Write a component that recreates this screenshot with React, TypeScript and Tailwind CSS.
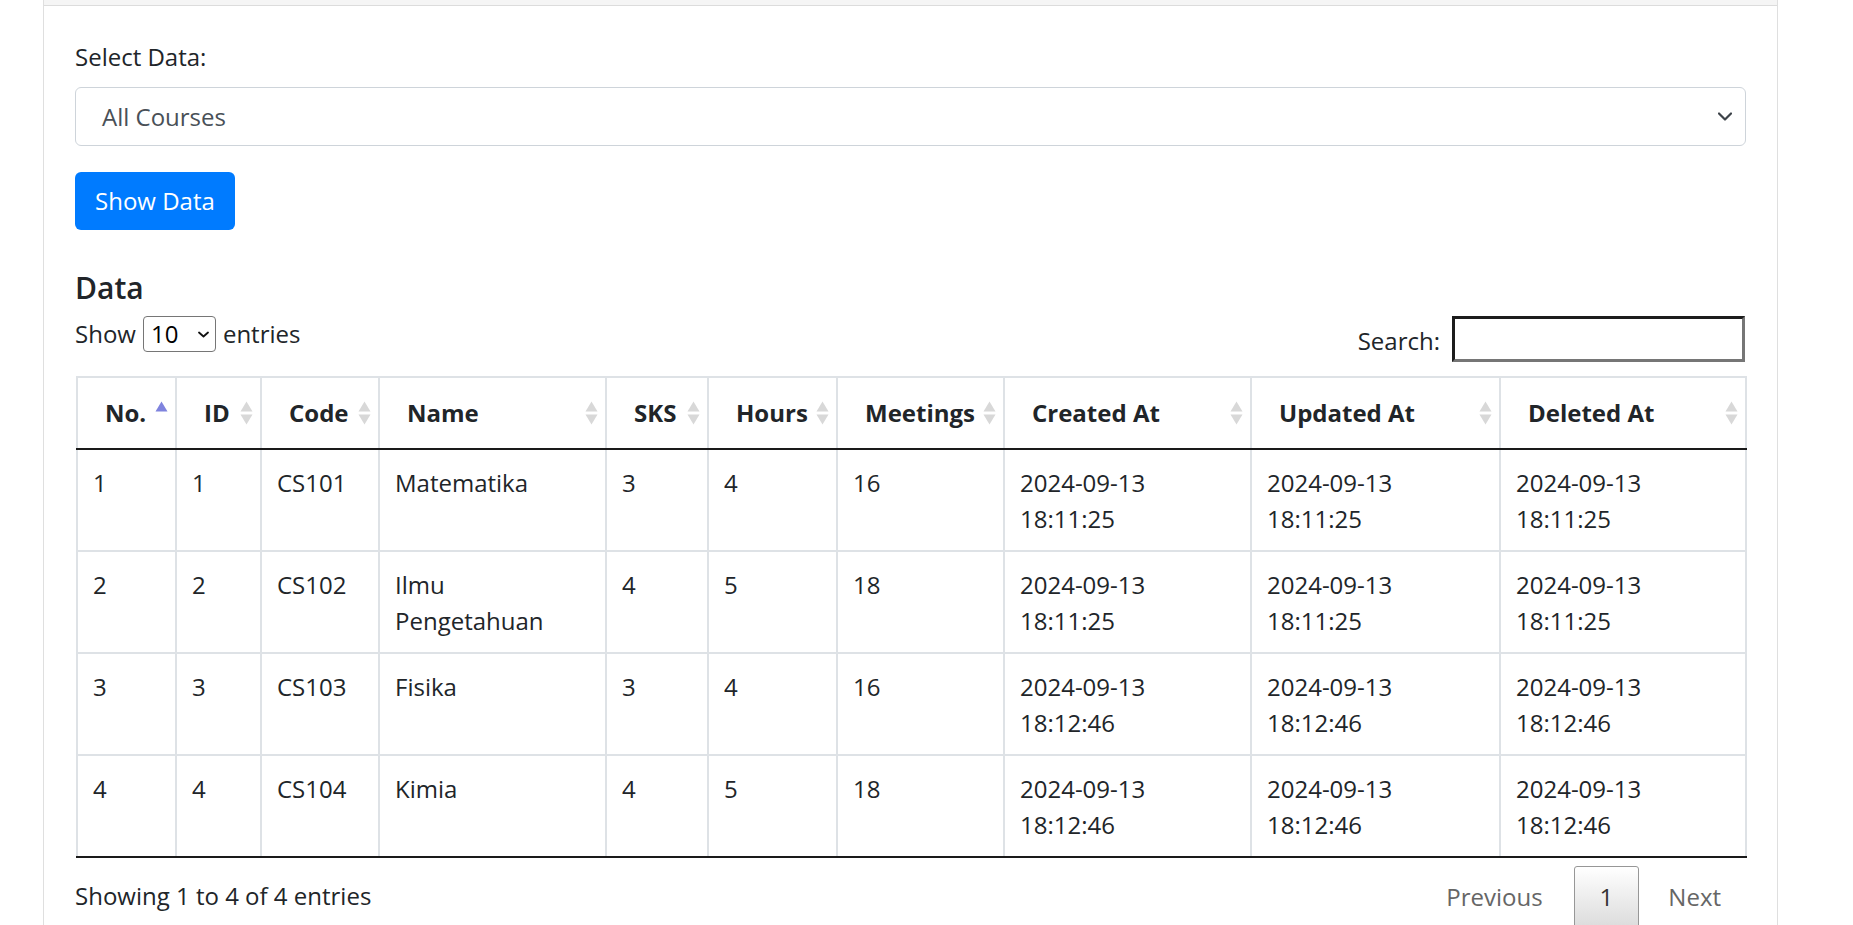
import React from "react";

type Row = {
  no: string;
  id: string;
  code: string;
  name: string[];
  sks: string;
  hours: string;
  meetings: string;
  time: string;
};

const rows: Row[] = [
  { no: "1", id: "1", code: "CS101", name: ["Matematika"], sks: "3", hours: "4", meetings: "16", time: "18:11:25" },
  { no: "2", id: "2", code: "CS102", name: ["Ilmu", "Pengetahuan"], sks: "4", hours: "5", meetings: "18", time: "18:11:25" },
  { no: "3", id: "3", code: "CS103", name: ["Fisika"], sks: "3", hours: "4", meetings: "16", time: "18:12:46" },
  { no: "4", id: "4", code: "CS104", name: ["Kimia"], sks: "4", hours: "5", meetings: "18", time: "18:12:46" },
];

const headers = ["No.", "ID", "Code", "Name", "SKS", "Hours", "Meetings", "Created At", "Updated At", "Deleted At"];
const colWidths = [99, 85, 118, 227, 102, 129, 167, 247, 249, 246];

function SortIcon({ active }: { active?: boolean }) {
  return (
    <svg width="13" height="24" viewBox="0 0 13 24" className="shrink-0">
      <polygon points="0.5,10.5 6.5,0.5 12.5,10.5" fill={active ? "#7f83de" : "#d8d8d8"} />
      {!active && <polygon points="0.5,13.5 12.5,13.5 6.5,23.5" fill="#d8d8d8" />}
    </svg>
  );
}

function Chevron({ w, h, sw, color }: { w: number; h: number; sw: number; color: string }) {
  return (
    <svg width={w} height={h} viewBox={`0 0 ${w} ${h}`}>
      <polyline
        points={`1,1.5 ${w / 2},${h - 1.5} ${w - 1},1.5`}
        fill="none"
        stroke={color}
        strokeWidth={sw}
        strokeLinecap="round"
        strokeLinejoin="round"
      />
    </svg>
  );
}

export default function App() {
  return (
    <div className="min-h-screen bg-white font-['Open_Sans',sans-serif] text-[24px] leading-[36px] text-[#212529]">
      <div className="ml-[43px] w-[1735px] border-x border-[#dfdfdf] pb-[60px]">
        <div className="h-[6px] bg-[#f5f5f5] border-b border-[#dcdcdc]" />
        <div className="px-[31px] pt-[33px]">
          <div>Select Data:</div>
          <div className="mt-[12px] flex h-[59px] items-center justify-between rounded-[6px] border border-[#ced4da] pl-[26px] pr-[13px] text-[#495057]">
            <span className="pt-[1px]">All Courses</span>
            <Chevron w={14} h={9} sw={2.2} color="#3d4349" />
          </div>
          <button className="mt-[26px] flex h-[58px] items-center rounded-[6px] bg-[#007bff] px-[20px] text-white">
            Show Data
          </button>

          <h5 className="mt-[40px] mb-[10px] text-[30px] leading-[36px] font-semibold">Data</h5>

          <div className="flex items-start justify-between">
            <div className="flex h-[36px] items-center">
              <span>Show</span>
              <div className="mx-[7px] flex h-[36px] w-[73px] items-center justify-between rounded-[4px] border border-[#767676] pl-[7px] pr-[6px] text-black">
                <span>10</span>
                <Chevron w={11} h={7} sw={1.8} color="#111" />
              </div>
              <span>entries</span>
            </div>
            <div className="flex items-start">
              <span className="mt-[7px]">Search:</span>
              <div className="ml-[12px] mr-[1px] h-[46px] w-[293px] border-[3px] border-t-[#1c1c1c] border-l-[#1c1c1c] border-b-[#767676] border-r-[#767676] bg-white" />
            </div>
          </div>

          <table className="mt-[14px] ml-[1px] w-[1669px] table-fixed border-collapse">
            <colgroup>
              {colWidths.map((w, i) => (
                <col key={i} style={{ width: w }} />
              ))}
            </colgroup>
            <thead>
              <tr>
                {headers.map((h, i) => (
                  <th
                    key={h}
                    className="border-2 border-[#dee2e6] border-b-2 border-b-[#1a1a1a] py-[17px] pl-[27px] pr-[7px] text-left font-bold leading-[36px]"
                  >
                    <div className="flex items-center justify-between">
                      <span className="whitespace-nowrap">{h}</span>
                      <SortIcon active={i === 0} />
                    </div>
                  </th>
                ))}
              </tr>
            </thead>
            <tbody>
              {rows.map((r, ri) => {
                const last = ri === rows.length - 1;
                const cells: React.ReactNode[] = [
                  r.no,
                  r.id,
                  r.code,
                  r.name.map((n, k) => <div key={k}>{n}</div>),
                  r.sks,
                  r.hours,
                  r.meetings,
                  <><div>2024-09-13</div><div>{r.time}</div></>,
                  <><div>2024-09-13</div><div>{r.time}</div></>,
                  <><div>2024-09-13</div><div>{r.time}</div></>,
                ];
                return (
                  <tr key={ri}>
                    {cells.map((c, ci) => (
                      <td
                        key={ci}
                        className={`h-[102px] border-2 border-[#dee2e6] px-[15px] pt-[15px] pb-[13px] align-top leading-[36px] ${last ? "border-b-[#1a1a1a]" : ""}`}
                      >
                        {c}
                      </td>
                    ))}
                  </tr>
                );
              })}
            </tbody>
          </table>

          <div className="flex items-start justify-between">
            <div className="pt-[20px]">Showing 1 to 4 of 4 entries</div>
            <div className="flex items-start pt-[8px]">
              <span className="border border-transparent px-[24px] py-[12px] text-[#666]">Previous</span>
              <span className="ml-[6px] rounded-[3px] border border-[#979797] bg-gradient-to-b from-white to-[#dcdcdc] px-[25px] py-[12px] text-[#333]">
                1
              </span>
              <span className="ml-[4px] border border-transparent px-[24px] py-[12px] text-[#666]">Next</span>
            </div>
          </div>
        </div>
      </div>
    </div>
  );
}
